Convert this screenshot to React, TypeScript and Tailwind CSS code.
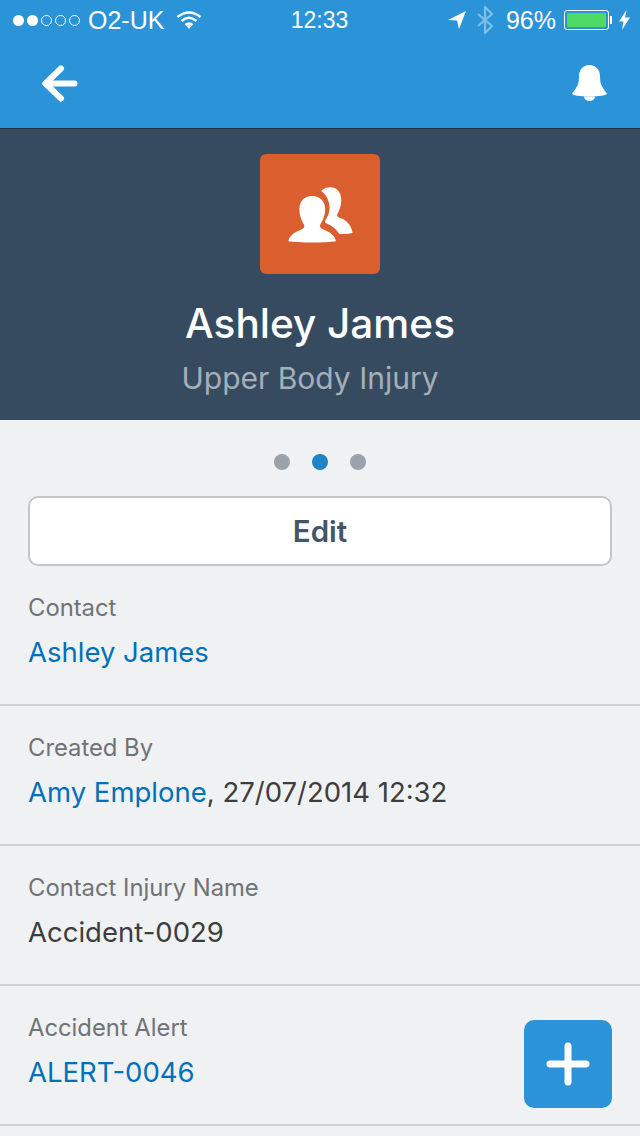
const font = "font-['Inter','Lato',sans-serif]";

function StatusBar() {
  return (
    <div className="flex h-10 items-center text-[25px] leading-none font-light text-white font-['Liberation_Sans',sans-serif]">
      <div className="flex flex-1 items-center pl-[13px]">
        <div className="flex gap-[3px]">
          <span className="h-[11px] w-[11px] rounded-full bg-white" />
          <span className="h-[11px] w-[11px] rounded-full bg-white" />
          <span className="h-[11px] w-[11px] rounded-full border border-white" />
          <span className="h-[11px] w-[11px] rounded-full border border-white" />
          <span className="h-[11px] w-[11px] rounded-full border border-white" />
        </div>
        <span className="ml-2">O2-UK</span>
        <svg className="ml-[12px]" width="26" height="20" viewBox="0 0 26 20" fill="none" stroke="white" strokeWidth="2.4">
          <path d="M1.5 7 Q13 -2 24.5 7" />
          <path d="M5.5 11 Q13 4.5 20.5 11" />
          <path d="M9.5 15 Q13 12 16.5 15" />
          <path d="M10.5 16 L13 19 L15.5 16 Q13 14 10.5 16 Z" fill="white" stroke="none" />
        </svg>
      </div>
      <span className="mr-[4px] text-[23px]">12:33</span>
      <div className="flex flex-1 items-center justify-end pr-[10px]">
        <svg width="18" height="18" viewBox="0 0 18 18" fill="white">
          <path d="M18 0 L0 9 L9 9.5 L11 18 Z" />
        </svg>
        <svg className="ml-[11px]" width="17" height="28" viewBox="0 0 17 28" fill="none" stroke="white" strokeOpacity="0.4" strokeWidth="2.2">
          <path d="M1 8 L15 20 L8 27 L8 1 L15 8 L1 20" />
        </svg>
        <span className="ml-[12px]">96%</span>
        <div className="ml-2 flex items-center">
          <div className="flex h-[20px] w-[45px] rounded-[3px] border border-white p-[2px]">
            <div className="h-full w-full rounded-[1px] bg-[#4cd964]" />
          </div>
          <span className="ml-px h-[8px] w-[2px] bg-white" />
        </div>
        <svg className="ml-[7px]" width="11" height="20" viewBox="0 0 11 20" fill="white">
          <path d="M7.5 0 L0 11.5 L4.5 11.5 L3 20 L11 7.5 L6 7.5 Z" />
        </svg>
      </div>
    </div>
  );
}

function NavBar() {
  return (
    <div className="flex h-[88px] items-start justify-between pr-[33px] pl-[42px] pt-[25px]">
      <svg width="37" height="37" viewBox="0 0 37 37" fill="none" stroke="white" strokeWidth="6" strokeLinecap="round" strokeLinejoin="round">
        <path d="M19 3.5 L3.5 18.5 L19 33.5" />
        <path d="M3.5 18.5 H32.5" />
      </svg>
      <svg width="35" height="37" viewBox="0 0 35 37" fill="white">
        <path d="M17.5 0 C24 0 28 5 28 11 C28 17 29 20 31 23 C32.5 25.5 34 27 35 29 C33 30.5 28 31.5 17.5 31.5 C7 31.5 2 30.5 0 29 C1 27 2.5 25.5 4 23 C6 20 7 17 7 11 C7 5 11 0 17.5 0 Z" />
        <path d="M12 31.5 L23 31.5 C22.5 37.5 12.5 37.5 12 31.5 Z" />
      </svg>
    </div>
  );
}

function PeopleIcon() {
  return (
    <svg width="67" height="57" viewBox="380 165 200 170" fill="white">
      <path d="M482 180 C490 172 500 169 510 169 C530 169 542 185 542 208 C542 225 535 240 529 252 C530 257 535 259 545 263 C560 270 573 285 576 305 C565 308 550 308 536 308 C528 295 515 283 497 276 C493 275 492 272 494 268 C503 255 507 245 507 230 C507 210 497 190 482 180 Z" />
      <path d="M455 195 C480 195 494 212 494 235 C494 255 484 272 478 283 C478 290 484 293 492 296 C510 303 525 315 526 330 C500 335 410 335 384 330 C386 315 400 303 420 296 C428 293 432 290 432 283 C426 272 417 255 417 235 C417 212 430 195 455 195 Z" />
    </svg>
  );
}

function Field({ label, children }: { label: string; children: React.ReactNode }) {
  return (
    <div className="relative h-[140px] border-b-2 border-[#ced2d6] px-[28px] pt-[26px]">
      <div className="text-[23.8px] leading-[32px] text-[#6f7277]">{label}</div>
      <div className="mt-[12px] text-[27.5px] leading-[32px] text-[#3c3d3e]">{children}</div>
    </div>
  );
}

const linkCls = "text-[#0070b8]";

export default function App() {
  return (
    <div className={`h-[1136px] w-[640px] overflow-hidden bg-[#f0f1f3] ${font}`}>
      <div className="border-b border-[#25303c] bg-[#2b93d7]">
        <StatusBar />
        <NavBar />
      </div>
      <div className="flex h-[291px] flex-col items-center bg-[#364b60] pt-[25px]">
        <div className="flex h-[120px] w-[120px] items-center justify-center rounded-[6px] bg-[#db5f2e]">
          <PeopleIcon />
        </div>
        <h1 className="mt-[24px] text-[40.5px] leading-[52px] font-medium text-white">Ashley James</h1>
        <p className="mt-[8px] mr-[20px] text-[30px] leading-[40px] text-[#a5afb9]">Upper Body Injury</p>
      </div>
      <div className="flex justify-center gap-[22px] pt-[34px]">
        <span className="h-4 w-4 rounded-full bg-[#9aa3ac]" />
        <span className="h-4 w-4 rounded-full bg-[#2083c4]" />
        <span className="h-4 w-4 rounded-full bg-[#9aa3ac]" />
      </div>
      <div className="px-[28px] pt-[26px]">
        <button className="h-[70px] w-full rounded-[10px] border-2 border-[#c3c5c8] bg-white pt-px text-[29.5px] font-semibold text-[#435566]">
          Edit
        </button>
      </div>
      <Field label="Contact">
        <span className={linkCls}>Ashley James</span>
      </Field>
      <Field label="Created By">
        <span className={linkCls}>Amy Emplone</span>, 27/07/2014 12:32
      </Field>
      <Field label="Contact Injury Name">Accident-0029</Field>
      <Field label="Accident Alert">
        <span className={linkCls}>ALERT-0046</span>
        <button className="absolute top-[34px] right-[28px] flex h-[88px] w-[88px] items-center justify-center rounded-[10px] bg-[#2b93d7]">
          <svg width="44" height="44" viewBox="0 0 44 44" fill="none" stroke="white" strokeWidth="7" strokeLinecap="round">
            <path d="M22 4 V40 M4 22 H40" />
          </svg>
        </button>
      </Field>
    </div>
  );
}
